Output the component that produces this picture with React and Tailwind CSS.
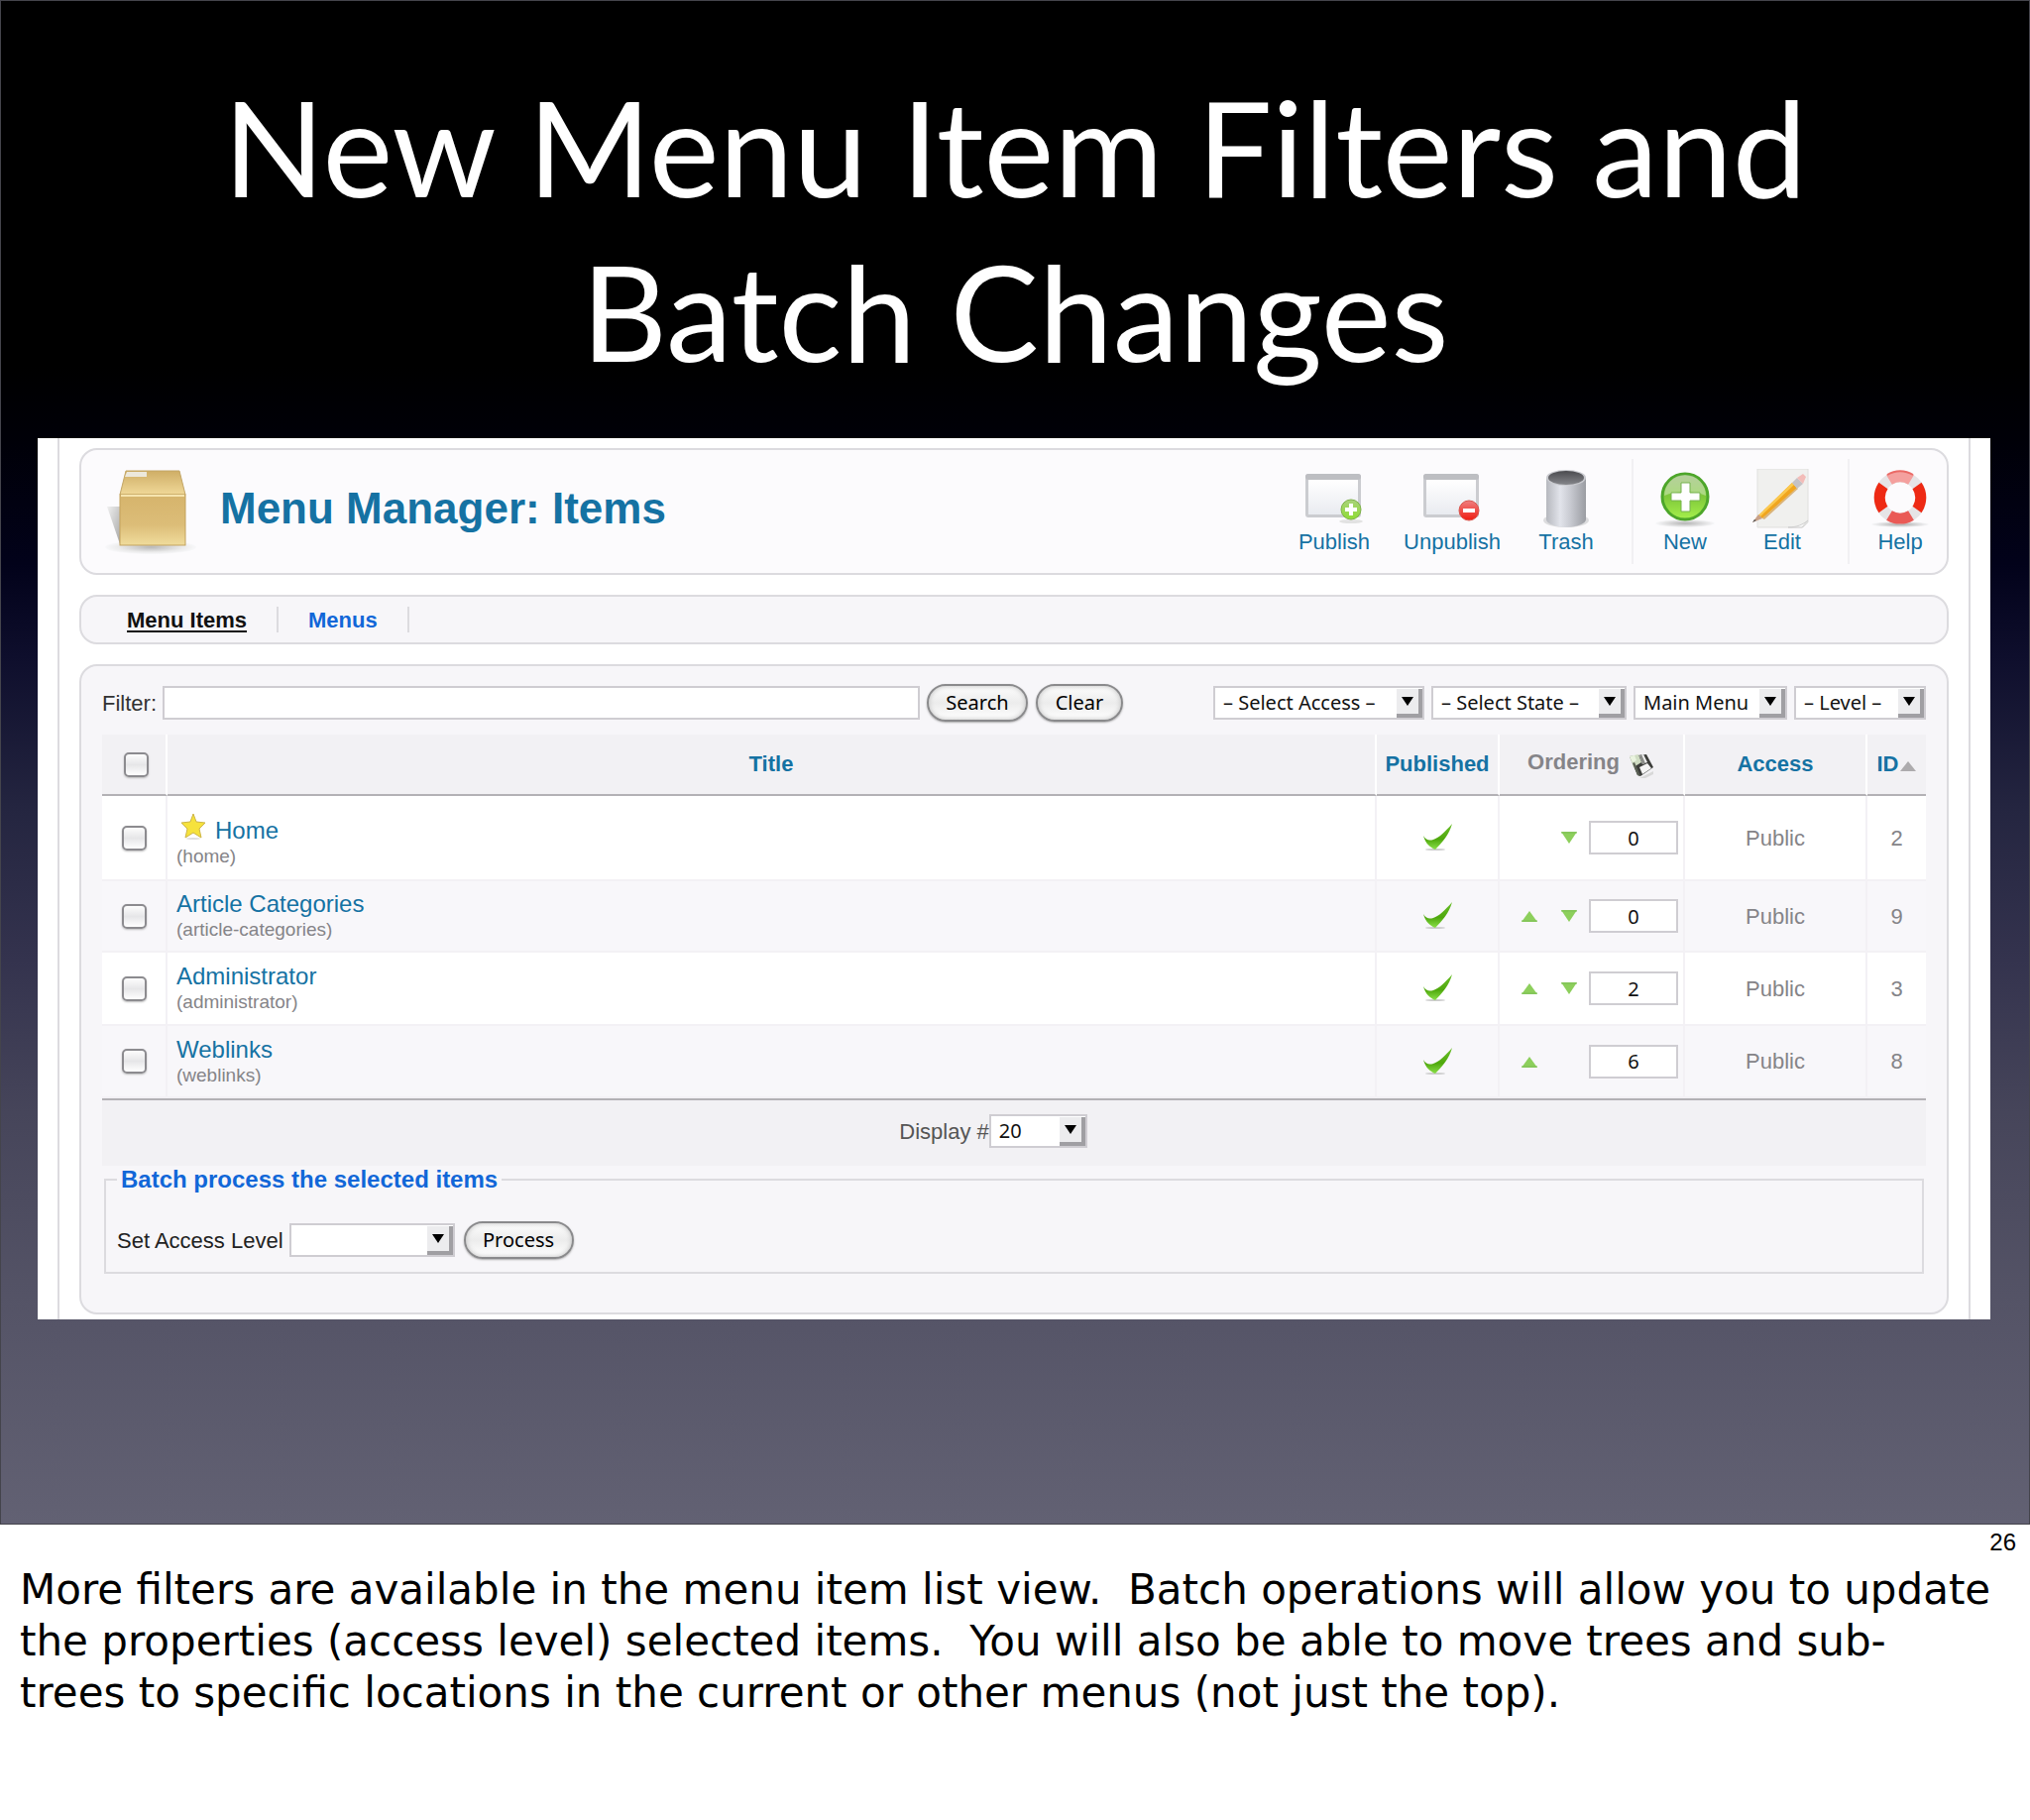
import React from "react";

const sans = "font-['Liberation_Sans',Arial,sans-serif]";
const ui = "font-['Noto_Sans','Open_Sans',sans-serif]";

/* ---------- drawings ---------- */

function BoxIcon() {
  return (
    <svg width="96" height="96" viewBox="0 0 96 96" aria-hidden="true">
      <defs>
        <linearGradient id="boxFront" x1="0" y1="0" x2="0" y2="1">
          <stop offset="0" stopColor="#d6b46c" />
          <stop offset="0.6" stopColor="#dcbd78" />
          <stop offset="1" stopColor="#f0dc9c" />
        </linearGradient>
        <linearGradient id="boxTop" x1="0" y1="0" x2="0" y2="1">
          <stop offset="0" stopColor="#cfae66" />
          <stop offset="1" stopColor="#f0d898" />
        </linearGradient>
        <linearGradient id="boxShade" x1="0" y1="0" x2="1" y2="1">
          <stop offset="0" stopColor="#f0f0f0" />
          <stop offset="1" stopColor="#a8a8a8" />
        </linearGradient>
        <radialGradient id="boxFloor">
          <stop offset="0" stopColor="#b8b8b8" />
          <stop offset="0.7" stopColor="#ebebeb" />
          <stop offset="1" stopColor="#f8f8fa" />
        </radialGradient>
      </defs>
      <ellipse cx="48" cy="84" rx="46" ry="7" fill="url(#boxFloor)" />
      <path d="M4 43h13v38z" fill="url(#boxShade)" />
      <path d="M23 7h54l6 24H17z" fill="url(#boxTop)" stroke="#c2a565" />
      <path d="M24 8h20v5H22z" fill="#ece8dc" />
      <rect x="17" y="31" width="66" height="51" fill="url(#boxFront)" stroke="#c3a25c" />
      <path d="M18 32h64" stroke="#f6e4ae" strokeWidth="2" />
    </svg>
  );
}

function WindowBase({ id }) {
  return (
    <>
      <defs>
        <linearGradient id={id} x1="0" y1="0" x2="0" y2="1">
          <stop offset="0" stopColor="#ffffff" />
          <stop offset="1" stopColor="#e9ebf0" />
        </linearGradient>
      </defs>
      <rect x="3" y="5" width="56" height="44" rx="3" fill="#cbccd0" />
      <rect x="3" y="5" width="56" height="6" rx="3" fill="#bdbec2" />
      <rect x="6" y="11" width="50" height="35" fill={`url(#${id})`} />
    </>
  );
}

function PublishIcon() {
  return (
    <svg width="64" height="60" viewBox="0 0 64 60" aria-hidden="true">
      <defs>
        <linearGradient id="pubDot" x1="0" y1="0" x2="0" y2="1">
          <stop offset="0" stopColor="#a9d27c" />
          <stop offset="1" stopColor="#8fdc34" />
        </linearGradient>
      </defs>
      <WindowBase id="winPub" />
      <ellipse cx="49" cy="53" rx="12" ry="2" fill="#e2e2e2" />
      <circle cx="49" cy="41" r="10" fill="url(#pubDot)" stroke="#7fb24a" />
      <path d="M49 35v12M43 41h12" stroke="#fff" strokeWidth="4" />
    </svg>
  );
}

function UnpublishIcon() {
  return (
    <svg width="64" height="60" viewBox="0 0 64 60" aria-hidden="true">
      <defs>
        <linearGradient id="unDot" x1="0" y1="0" x2="0" y2="1">
          <stop offset="0" stopColor="#ef8080" />
          <stop offset="1" stopColor="#f01c10" />
        </linearGradient>
      </defs>
      <WindowBase id="winUn" />
      <circle cx="49" cy="42" r="10" fill="url(#unDot)" stroke="#d9564e" />
      <path d="M43 42h12" stroke="#fff" strokeWidth="4" />
    </svg>
  );
}

function TrashIcon() {
  return (
    <svg width="64" height="60" viewBox="0 0 64 60" aria-hidden="true">
      <defs>
        <linearGradient id="canBody" x1="0" y1="0" x2="1" y2="0">
          <stop offset="0" stopColor="#b6b8be" />
          <stop offset="0.35" stopColor="#e2e4eb" />
          <stop offset="0.6" stopColor="#c9cbd2" />
          <stop offset="1" stopColor="#9a9ca2" />
        </linearGradient>
        <linearGradient id="canHole" x1="0" y1="0" x2="0" y2="1">
          <stop offset="0" stopColor="#4a4a4e" />
          <stop offset="1" stopColor="#85868b" />
        </linearGradient>
      </defs>
      <ellipse cx="32" cy="52" rx="23" ry="7" fill="#dcdcde" />
      <path d="M12 9v42c0 4 9 8 20 8s20-4 20-8V9z" fill="url(#canBody)" />
      <ellipse cx="32" cy="9" rx="20" ry="8" fill="#c9cacf" />
      <ellipse cx="32" cy="9" rx="18" ry="7" fill="url(#canHole)" />
    </svg>
  );
}

function NewIcon() {
  return (
    <svg width="64" height="60" viewBox="0 0 64 60" aria-hidden="true">
      <defs>
        <linearGradient id="newDot" x1="0" y1="0" x2="0" y2="1">
          <stop offset="0" stopColor="#8fb56a" />
          <stop offset="0.5" stopColor="#7fc83a" />
          <stop offset="1" stopColor="#a6f04c" />
        </linearGradient>
        <radialGradient id="newFloor">
          <stop offset="0" stopColor="#b4b4b4" />
          <stop offset="1" stopColor="#f8f8fa" />
        </radialGradient>
      </defs>
      <ellipse cx="32" cy="55" rx="30" ry="4" fill="url(#newFloor)" />
      <circle cx="32" cy="28" r="23" fill="url(#newDot)" stroke="#4da62a" strokeWidth="3" />
      <path d="M11 27a21 21 0 0 1 42 0c-12-5-30-5-42 0z" fill="#fff" opacity="0.350" />
      <path d="M28 14h9v10h10v8H37v11h-9V32H18v-8h10z" fill="#fff" stroke="#76b34e" strokeWidth="1" />
    </svg>
  );
}

function EditIcon() {
  return (
    <svg width="64" height="60" viewBox="0 0 64 60" aria-hidden="true">
      <path d="M7 0h51v54l-5 5H7z" fill="#f0f0ee" stroke="#e0e0de" />
      <path d="M58 52l-6 7H38c9 0 15-3 20-7z" fill="#fafafa" stroke="#cfcfcf" />
      <path d="M8 47L42 14l5 5L12 50z" fill="#f0a51e" />
      <path d="M8 47L42 14l2 2L10 48z" fill="#fbc94e" />
      <path d="M12 50L47 19l1 1L14 51z" fill="#c98a2c" opacity="0.600" />
      <path d="M42 14l5-5 6 6-6 5z" fill="#c4c2c6" />
      <path d="M47 9l6-4 3 3-3 7z" fill="#f3bcb8" />
      <path d="M8 46l4 4-10 4z" fill="#c9a188" />
      <path d="M4 51l2 1-4 2z" fill="#555" />
    </svg>
  );
}

function HelpIcon() {
  return (
    <svg width="64" height="60" viewBox="0 0 64 60" aria-hidden="true">
      <defs>
        <radialGradient id="helpFloor">
          <stop offset="0" stopColor="#a8a8a8" />
          <stop offset="1" stopColor="#f8f8fa" />
        </radialGradient>
      </defs>
      <ellipse cx="32" cy="56" rx="29" ry="3" fill="url(#helpFloor)" />
      <g fill="none" strokeWidth="11">
        <circle cx="32" cy="29" r="21" stroke="#e6e4e6" />
        <path d="M21 11A21 21 0 0 1 43 11" stroke="#f4a09e" />
        <path d="M49 17A21 21 0 0 1 49 41" stroke="#ee2a14" />
        <path d="M43 47A21 21 0 0 1 21 47" stroke="#ea5a56" />
        <path d="M15 41A21 21 0 0 1 15 17" stroke="#ee2a14" />
      </g>
      <path d="M19 6c8-5 18-5 26 0" fill="none" stroke="#ea6a66" strokeWidth="2" />
    </svg>
  );
}

function StarIcon() {
  return (
    <svg width="28" height="28" viewBox="0 0 28 28" aria-hidden="true">
      <ellipse cx="14" cy="26" rx="7" ry="1" fill="#dedede" />
      <path
        d="M14 1l3 8 9 1-6 6 2 9-8-5-8 5 2-9-6-6 9-1z"
        fill="#f6e23c"
        stroke="#cdb545"
        strokeWidth="1"
      />
    </svg>
  );
}

function CheckIcon() {
  return (
    <svg className="mx-auto block" width="32" height="30" viewBox="0 0 32 30" aria-hidden="true">
      <defs>
        <linearGradient id="tick" x1="0" y1="0" x2="0" y2="1">
          <stop offset="0" stopColor="#6abf2a" />
          <stop offset="0.6" stopColor="#4fa80c" />
          <stop offset="1" stopColor="#8be04a" />
        </linearGradient>
      </defs>
      <ellipse cx="14" cy="27" rx="10" ry="1" fill="#cccccc" />
      <path d="M2 13c3 5 6 5 10 4C18 15 24 9 31 1 28 12 21 20 14 27 9 25 4 21 2 13z" fill="url(#tick)" />
    </svg>
  );
}

function Triangle({ up, label }) {
  return (
    <button type="button" aria-label={label} className="flex h-5 w-4 items-center">
      <svg width="16" height="12" viewBox="0 0 16 12" aria-hidden="true">
        <path d={up ? "M8 1l8 11H0z" : "M0 0h16L8 12z"} fill="#8dcf5c" />
        <path d={up ? "M0 11h16" : "M0 1h16"} stroke="#7fbf58" />
      </svg>
    </button>
  );
}

function DiskIcon() {
  return (
    <svg width="28" height="26" viewBox="0 0 28 26" aria-hidden="true">
      <path d="M12 25l14-7v3l-8 4z" fill="#d8d8d8" />
      <path d="M2 3L19 1l7 13-13 9-3-1z" fill="#3c3d3a" />
      <path d="M2 3l9-2 3 8-8 5z" fill="#cfdcc2" />
      <path d="M2 3l5-1 2 5-4 2z" fill="#eaf4df" />
      <path d="M12 2l4-1 4 8-5 2z" fill="#f0f0f0" />
      <path d="M12 2l2-1 4 9-3 1z" fill="#8a8c88" />
      <path d="M12 14l8-4 4 5-9 6z" fill="#f4f4f4" />
      <path d="M5 10l2-1 6 14-3-1z" fill="#5b6155" />
    </svg>
  );
}

/* ---------- controls ---------- */

function Drop({ label, width, value }) {
  return (
    <div className={`relative shrink-0 ${width}`}>
      <select
        aria-label={label}
        className={`block h-[34px] w-full appearance-none border-2 border-[#cfcdd2] bg-white pl-2 text-[20px] leading-[28px] text-[#111] ${ui}`}
      >
        <option>{value}</option>
      </select>
      <span className="pointer-events-none absolute top-[3px] right-[2px] flex h-[29px] w-[26px] items-center justify-center border-r-4 border-b-4 border-[#a09fa3] bg-[#ececee]">
        <svg width="12" height="9" viewBox="0 0 12 9" aria-hidden="true">
          <path d="M0 0h12L6 9z" fill="#000" />
        </svg>
      </span>
    </div>
  );
}

function Pill({ children, width }) {
  return (
    <button
      type="button"
      className={`h-[38px] shrink-0 rounded-full border-2 border-[#8a8a8c] bg-linear-to-b from-[#fdfdfd] via-[#ececec] to-[#ffffff] text-[20px] leading-[30px] text-black shadow-[0_1px_2px_#aaa,inset_0_0_5px_#bbb] ${width} ${ui}`}
    >
      {children}
    </button>
  );
}

function Tick({ label }) {
  return (
    <input
      type="checkbox"
      aria-label={label}
      className="block h-[25px] w-[25px] appearance-none rounded-[5px] border-2 border-[#8c8b8f] bg-linear-to-b from-[#fdfdfd] via-[#e6e6e8] to-[#ffffff] shadow-[0_1px_2px_#bbb]"
    />
  );
}

function Tool({ icon, children, width }) {
  return (
    <button type="button" className={`flex shrink-0 flex-col items-center gap-[2px] ${width}`}>
      {icon}
      <span className="text-[22px] leading-[24px] text-[#1572a3]">{children}</span>
    </button>
  );
}

const rows = [
  { title: "Home", alias: "(home)", home: true, down: true, order: "0", id: "2", height: "h-[86px]" },
  { title: "Article Categories", alias: "(article-categories)", up: true, down: true, order: "0", id: "9", height: "h-[72px]" },
  { title: "Administrator", alias: "(administrator)", up: true, down: true, order: "2", id: "3", height: "h-[74px]" },
  { title: "Weblinks", alias: "(weblinks)", up: true, order: "6", id: "8", height: "h-[73px]" },
];

const headCell =
  "border-r-2 border-b-2 border-r-white border-b-[#b3b1b5] bg-[#f2f1f4] p-0 text-[22px] leading-[26px] font-bold text-[#1572a3]";
const bodyCell = "border-r-2 border-b-2 border-[#f3f1f5] p-0";

function ItemsTable() {
  return (
    <table className="mt-[13px] w-full table-fixed border-separate border-spacing-0">
      <colgroup>
        <col className="w-[66px]" />
        <col />
        <col className="w-[124px]" />
        <col className="w-[187px]" />
        <col className="w-[184px]" />
        <col className="w-[59px]" />
      </colgroup>
      <thead>
        <tr className="h-[62px]">
          <th className={headCell}>
            <div className="flex justify-center pl-1">
              <Tick label="Select all" />
            </div>
          </th>
          <th className={headCell}><a href="#title">Title</a></th>
          <th className={headCell}><a href="#published">Published</a></th>
          <th className={headCell}>
            <div className="flex items-start justify-center gap-2 text-[#858488]">
              <span>Ordering</span>
              <button type="button" aria-label="Save order" className="pt-1"><DiskIcon /></button>
            </div>
          </th>
          <th className={headCell}><a href="#access">Access</a></th>
          <th className="border-b-2 border-b-[#b3b1b5] bg-[#f2f1f4] p-0 text-[22px] leading-[26px] font-bold text-[#1572a3]">
            <a href="#id" className="flex items-center justify-center">
              ID
              <svg className="mt-1" width="18" height="12" viewBox="0 0 18 12" aria-hidden="true">
                <path d="M9 1l8 10H1z" fill="#adabad" />
              </svg>
            </a>
          </th>
        </tr>
      </thead>
      <tbody>
        {rows.map((row, i) => (
          <tr key={row.title} className={`${row.height} ${i % 2 ? "bg-[#f8f7fa]" : "bg-white"}`}>
            <td className={bodyCell}>
              <div className="flex justify-center"><Tick label={`Select ${row.title}`} /></div>
            </td>
            <td className={bodyCell}>
              <div className={row.home ? "pt-[6px] pl-[9px]" : "pl-[9px]"}>
                <div className="flex items-end gap-2 text-[24px] leading-[28px]">
                  {row.home && (
                    <span className="pb-1 pl-[3px]"><StarIcon /></span>
                  )}
                  <a href={`#${row.id}`} className="text-[#1572a3]">{row.title}</a>
                </div>
                <div className="text-[19px] leading-[24px] text-[#858488]">{row.alias}</div>
              </div>
            </td>
            <td className={bodyCell}><CheckIcon /></td>
            <td className={bodyCell}>
              <div className="flex items-center justify-end gap-3 pr-[5px]">
                {row.up && <Triangle up label={`Move ${row.title} up`} />}
                <span className="flex w-7 justify-end">
                  {row.down && <Triangle label={`Move ${row.title} down`} />}
                </span>
                <input
                  aria-label={`Order of ${row.title}`}
                  defaultValue={row.order}
                  className={`h-[34px] w-[90px] border-2 border-[#cfcdd2] bg-white text-center text-[20px] leading-[28px] text-[#111] ${ui}`}
                />
              </div>
            </td>
            <td className={`${bodyCell} text-center text-[22px] text-[#858488]`}>Public</td>
            <td className="border-b-2 border-[#f3f1f5] p-0 text-center text-[22px] text-[#858488]">{row.id}</td>
          </tr>
        ))}
      </tbody>
      <tfoot>
        <tr className="h-[68px]">
          <td colSpan={6} className="border-t-2 border-[#b3b1b5] bg-[#f2f1f4] p-0 align-top">
            <div className="flex items-center justify-center pt-[14px] pr-[42px] text-[22px] text-[#555]">
              <span>Display #</span>
              <Drop label="Display #" width="w-[99px]" value="20" />
            </div>
          </td>
        </tr>
      </tfoot>
    </table>
  );
}

function MenuManager() {
  return (
    <section className={`mr-[39px] ml-[37px] bg-white px-[20px] ${sans}`}>
      <div className="border-x-2 border-[#dcdbdf] px-[20px] pt-[10px] pb-[5px]">
        <header className="flex h-[128px] items-center rounded-[18px] border-2 border-[#dcdbdf] bg-[#fcfbfd] pl-[22px]">
          <BoxIcon />
          <h2 className="ml-[22px] flex-1 pb-[6px] text-[44px] leading-[48px] font-bold text-[#1572a3]">
            Menu Manager: Items
          </h2>
          <div className="flex h-[106px] items-center">
            <Tool icon={<PublishIcon />} width="w-[120px]">Publish</Tool>
            <Tool icon={<UnpublishIcon />} width="w-[118px]">Unpublish</Tool>
            <Tool icon={<TrashIcon />} width="w-[112px]">Trash</Tool>
            <span className="ml-[10px] h-full border-l-2 border-[#f1f0f3]" />
            <Tool icon={<NewIcon />} width="w-[104px]">New</Tool>
            <Tool icon={<EditIcon />} width="w-[92px]">Edit</Tool>
            <span className="ml-[20px] h-full border-l-2 border-[#f1f0f3]" />
            <span className="pl-[4px]">
              <Tool icon={<HelpIcon />} width="w-[94px]">Help</Tool>
            </span>
          </div>
        </header>

        <nav className="mt-[20px] flex h-[50px] items-center rounded-[18px] border-2 border-[#dcdbdf] bg-[#f7f6f9] pl-[46px] text-[22px] font-bold">
          <a href="#items" className="text-[#111] underline decoration-2 underline-offset-3">Menu Items</a>
          <span className="ml-[30px] h-[26px] border-l-2 border-[#dcdbdf]" />
          <a href="#menus" className="ml-[30px] text-[#1167d8]">Menus</a>
          <span className="ml-[30px] h-[26px] border-l-2 border-[#dcdbdf]" />
        </nav>

        <main className="mt-[20px] rounded-[18px] border-2 border-[#dcdbdf] bg-[#f7f6f9] px-[21px] pt-[18px] pb-[39px]">
          <form className="flex items-center">
            <label htmlFor="filter" className="text-[22px] text-[#333]">Filter:</label>
            <input
              id="filter"
              className="ml-[6px] h-[34px] min-w-0 flex-1 border-2 border-[#cfcdd2] bg-white px-2 text-[20px]"
            />
            <div className="ml-[7px] flex gap-2">
              <Pill width="w-[102px]">Search</Pill>
              <Pill width="w-[88px]">Clear</Pill>
            </div>
            <div className="ml-[91px] flex gap-[7px]">
              <Drop label="Access" width="w-[213px]" value="– Select Access –" />
              <Drop label="State" width="w-[197px]" value="– Select State –" />
              <Drop label="Menu" width="w-[155px]" value="Main Menu" />
              <Drop label="Level" width="w-[133px]" value="– Level –" />
            </div>
          </form>

          <ItemsTable />

          <fieldset className="mx-[2px] border-2 border-[#dcdbdf] px-[11px] pb-[13px]">
            <legend className="px-1 text-[24px] leading-[28px] font-bold text-[#1167d8]">
              Batch process the selected items
            </legend>
            <div className="mt-[28px] flex items-center text-[22px] text-[#222]">
              <span className="mr-[6px]">Set Access Level</span>
              <Drop label="Set Access Level" width="w-[167px]" value="" />
              <span className="w-[9px]" />
              <Pill width="w-[111px]">Process</Pill>
            </div>
          </fieldset>
        </main>
      </div>
    </section>
  );
}

export default function App() {
  return (
    <div className="min-h-screen bg-white">
      <div className="border border-[#44444c] bg-[linear-gradient(to_bottom,#000_0%,#000_24%,#000008_29%,#02021a_37%,#0e0e2c_43%,#242540_53%,#34334e_63%,#46455a_73%,#545366_85%,#626173_100%)] pb-[206px]">
        <h1 className="pt-[64px] pb-[45px] text-center font-['Lato','Open_Sans',sans-serif] text-[134px] leading-[166px] text-white">
          <span className="block">New Menu Item Filters and</span>
          <span className="block">Batch Changes</span>
        </h1>
        <MenuManager />
      </div>

      <footer className="px-[20px] text-black">
        <p className={`-mr-[6px] pt-[4px] text-right text-[24px] leading-[28px] ${sans}`}>26</p>
        <p className="pt-[8px] font-['DejaVu_Sans',sans-serif] text-[42px] leading-[52px] whitespace-nowrap">
          <span className="block">More filters are available in the menu item list view.&nbsp; Batch operations will allow you to update</span>
          <span className="block">the properties (access level) selected items.&nbsp; You will also be able to move trees and sub-</span>
          <span className="block">trees to specific locations in the current or other menus (not just the top).</span>
        </p>
      </footer>
    </div>
  );
}
